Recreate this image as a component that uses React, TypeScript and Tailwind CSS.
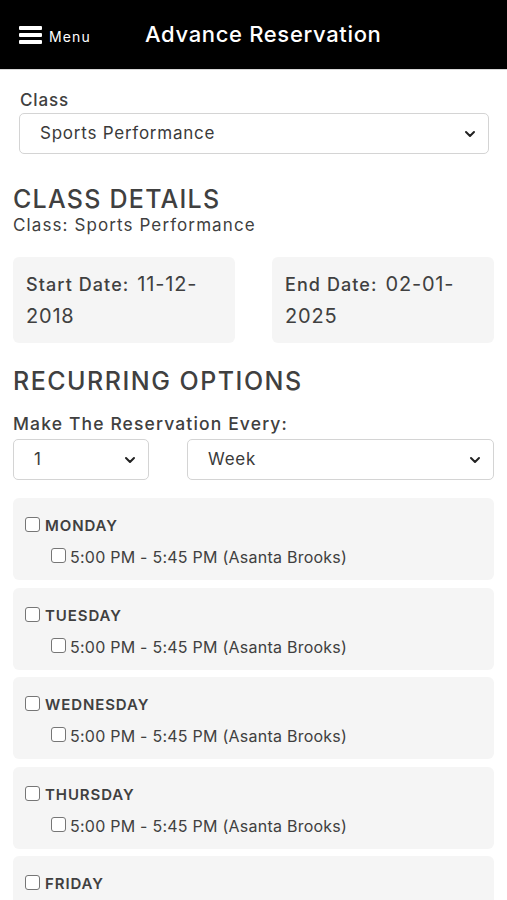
import React from "react";

const Chevron = () => (
  <svg width="12" height="8" viewBox="0 0 12 8" className="shrink-0">
    <path d="M2 2 L6 6 L10 2" fill="none" stroke="#222" strokeWidth="2" strokeLinecap="round" strokeLinejoin="round" />
  </svg>
);

const Box = ({ className = "" }: { className?: string }) => (
  <span className={"inline-block w-[15px] h-[15px] rounded-[3px] border border-[#767676] bg-white shrink-0 " + className} />
);

const Select = ({ value, className = "" }: { value: string; className?: string }) => (
  <div className={"flex items-center justify-between h-[41px] border border-[#d4d4d4] rounded-[5px] bg-white pl-[20px] pr-[12px] " + className}>
    <span className="text-[17px] tracking-[0.045em] text-[#3a3a3a]">{value}</span>
    <Chevron />
  </div>
);

const days = ["MONDAY", "TUESDAY", "WEDNESDAY", "THURSDAY", "FRIDAY"];

export default function App() {
  return (
    <div className="w-[507px] h-[900px] overflow-hidden bg-white text-[#404040]" style={{ fontFamily: "Inter, 'Open Sans', sans-serif" }}>
      <header className="h-[70px] bg-black border-b border-[#d8d8d8] flex items-center">
        <div className="flex items-center pl-[19px] w-[145px]">
          <div className="flex flex-col gap-[3px] w-[23px]">
            <span className="block h-[4px] bg-white rounded-[1px]" />
            <span className="block h-[4px] bg-white rounded-[1px]" />
            <span className="block h-[4px] bg-white rounded-[1px]" />
          </div>
          <span className="ml-[7px] mt-[3px] text-white text-[14px] tracking-[0.08em]">Menu</span>
        </div>
        <span className="text-white text-[22px] font-medium tracking-[0.03em]">Advance Reservation</span>
      </header>

      <div className="px-[19px] pt-[19px]">
        <div className="text-[17px] font-medium leading-[22px] pl-[1px] tracking-[0.05em]">Class</div>
        <Select value="Sports Performance" className="mt-[2px] w-[470px]" />
      </div>

      <div className="px-[13px]">
        <h2 className="mt-[30px] text-[25px] font-medium leading-[30px] tracking-[0.05em]">CLASS DETAILS</h2>
        <div className="text-[17px] leading-[22px] tracking-[0.065em]">Class: Sports Performance</div>

        <div className="mt-[21px] flex gap-[37px]">
          {[["Start Date:", "11-12-", "2018"], ["End Date:", "02-01-", "2025"]].map(([l, a, b]) => (
            <div key={l} className="w-[222px] h-[86px] bg-[#f5f5f5] rounded-[6px] pl-[13px] pt-[12px]">
              <div className="leading-[31px]">
                <span className="text-[18px] font-medium tracking-[0.06em]">{l}</span>
                <span className="text-[20px] ml-[8px] tracking-[0.04em]">{a}</span>
              </div>
              <div className="text-[20px] leading-[31px] tracking-[0.04em]">{b}</div>
            </div>
          ))}
        </div>

        <h2 className="mt-[23px] text-[25px] font-medium leading-[30px] tracking-[0.06em]">RECURRING OPTIONS</h2>
        <div className="mt-[17px] text-[17.5px] font-medium leading-[22px] tracking-[0.065em]">Make The Reservation Every:</div>
        <div className="mt-[4px] flex gap-[38px]">
          <Select value="1" className="w-[136px]" />
          <Select value="Week" className="flex-1" />
        </div>

        <div className="mt-[18px] flex flex-col gap-[7.5px]">
          {days.map((d) => (
            <div key={d} className="h-[82px] bg-[#f5f5f5] rounded-[6px] pl-[12px] pt-[15px]">
              <div className="flex items-center">
                <Box />
                <span className="ml-[5px] mt-[3px] text-[15px] font-semibold leading-[20px] tracking-[0.06em]">{d}</span>
              </div>
              <div className="flex items-center ml-[26px] mt-[8px]">
                <Box />
                <span className="ml-[4px] mt-[3px] text-[16px] leading-[20px] tracking-[0.015em]">5:00 PM - 5:45 PM (Asanta Brooks)</span>
              </div>
            </div>
          ))}
        </div>
      </div>
    </div>
  );
}
